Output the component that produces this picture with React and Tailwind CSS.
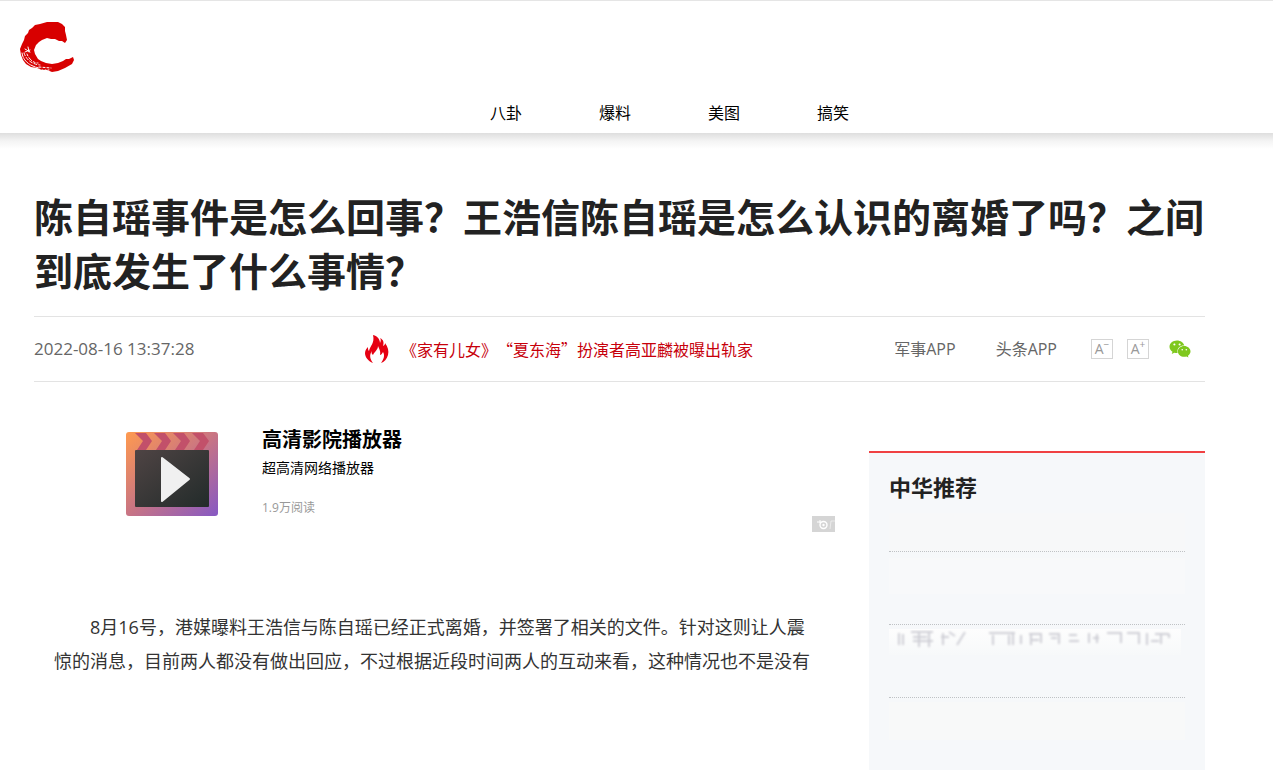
import React from 'react';
import { FaWeixin } from 'react-icons/fa';

const NAV_ITEMS = ['八卦', '爆料', '美图', '搞笑'];
const APP_LINKS = ['军事APP', '头条APP'];

function Logo() {
  return (
    <svg viewBox="0 0 54 52" className="block w-[54px] h-[52px]" aria-hidden="true">
      <path
        fill="#d80000"
        d="M34 1 L27 1 L20 3 L15 4 L12 7 L9 9 L8 12 L5 15 L4 19 L2 23 L0 28 L1 34 L3 39 L6 43 L11 46 L17 47 L22 49 L27 49 L32 51 L38 50 L45 47 L52 43 L54 39 L53 36 L49 38 L46 38 L43 40 L38 42 L32 43 L26 42 L21 40 L18 38 L15 33 L14 29 L16 24 L19 21 L22 19 L27 17 L31 18 L35 18 L39 20 L42 20 L45 22 L47 19 L46 14 L45 10 L45 6 L42 3 L38 1 Z"
      />
      <g fill="none" stroke="#fff" strokeWidth="1" strokeLinecap="round">
        <path d="M2 32 C3 40 10 45 19 47" strokeDasharray="4 1 2 1" />
        <path d="M4 32 C6 38 11 43 20 44" strokeDasharray="3 2" />
        <path d="M7 33 C9 38 13 42 18 42" strokeDasharray="2 2 4 2" />
        <path d="M5 28 L10 31 M8 26 L9 31 M5 31 L10 29" />
        <path d="M19 46 L31 47" strokeDasharray="2 2" />
        <path d="M22 49 L29 49" strokeDasharray="1 2" />
      </g>
    </svg>
  );
}

function Flame() {
  return (
    <svg viewBox="0 0 24 28" className="block w-6 h-7 shrink-0" aria-hidden="true">
      <path
        fill="#e60012"
        d="M8 0 C13 1 15 5 15 8 C16 6 16 4 15 3 C19 5 19 8 18 11 C20 10 20 9 20 8 C23 12 24 16 23 20 C22 24 19 27 16 28 C19 24 20 20 18 17 C17 19 16 20 15 20 C16 16 14 14 13 11 C13 15 9 17 8 20 C7 19 6 18 7 16 C4 20 5 24 8 28 C3 26 0 22 0 18 C0 15 2 13 3 12 C3 14 3 15 4 16 C5 11 10 8 8 0 Z"
      />
    </svg>
  );
}

function PlayerIcon() {
  return (
    <svg viewBox="0 0 92 84" className="block w-[92px] h-[84px] shrink-0" aria-hidden="true">
      <defs>
        <linearGradient id="frame" x1="0" y1="0" x2="1" y2="1">
          <stop offset="0" stopColor="#ff9a4f" />
          <stop offset="0.5" stopColor="#c87484" />
          <stop offset="1" stopColor="#8659c4" />
        </linearGradient>
        <linearGradient id="screen" x1="0" y1="0" x2="1" y2="1">
          <stop offset="0" stopColor="#4f4444" />
          <stop offset="1" stopColor="#222b2a" />
        </linearGradient>
      </defs>
      <rect width="92" height="84" rx="3" fill="url(#frame)" />
      <g fill="#c2506a">
        <path d="M9 1 H20 L26 9 L20 18 H11 L17 9 Z" />
        <path d="M28 1 H39 L45 9 L39 18 H30 L36 9 Z" />
        <path d="M47 1 H58 L64 9 L58 18 H49 L55 9 Z" />
        <path d="M66 1 H77 L83 9 L77 18 H68 L74 9 Z" />
      </g>
      <rect x="9" y="18" width="74" height="57" rx="1" fill="url(#screen)" />
      <path d="M36 26 L63 47 L36 69 Z" fill="#f0f0f0" stroke="#f0f0f0" strokeWidth="2" strokeLinejoin="round" />
    </svg>
  );
}

function AdMark() {
  return (
    <svg viewBox="0 0 23 16" className="block w-[23px] h-4" aria-hidden="true">
      <rect width="23" height="16" fill="#d5d5d5" />
      <g fill="none" stroke="#fff">
        <circle cx="11.5" cy="9" r="3.5" strokeWidth="1.4" />
        <path d="M5 6 H9 M8 4 V7" strokeWidth="1" />
        <path d="M18 13 L19 5 H23" strokeWidth="1" opacity="0.5" />
      </g>
      <circle cx="11.5" cy="9" r="1.2" fill="#fff" />
    </svg>
  );
}

function Header() {
  return (
    <header className="bg-white">
      <div className="border-t border-[#e5e5e5] px-5 pt-5">
        <a href="#" aria-label="中华网" className="inline-block align-top"><Logo /></a>
      </div>
      <nav className="mt-6 flex gap-[77px] pb-1 pl-[490px] text-base leading-8 text-black">
        {NAV_ITEMS.map((item) => (
          <a key={item} href="#">{item}</a>
        ))}
      </nav>
      <div className="h-4 bg-linear-to-b from-[#dedede] via-[#f4f4f4] to-white"></div>
    </header>
  );
}

function FontButton({ sign, label }) {
  return (
    <button
      type="button"
      aria-label={label}
      className="flex h-5 w-[22px] items-center justify-center border border-[#d5d5d5] text-sm leading-4 text-[#999]"
    >
      A<sup className="text-[10px]">{sign}</sup>
    </button>
  );
}

function ArticleInfo() {
  return (
    <div className="flex h-[66px] items-center border-y border-[#e3e3e3] pr-3.5 text-base text-[#666]">
      <time className="w-[331px] text-[17px]">2022-08-16 13:37:28</time>
      <a href="#" className="flex items-center gap-3 text-[#c7000b]">
        <Flame />
        <span className="font-['Noto_Sans_CJK_SC',sans-serif] [text-spacing-trim:space-all]">
          《家有儿女》“夏东海”扮演者高亚麟被曝出轨家
        </span>
      </a>
      <div className="ml-auto flex items-center">
        {APP_LINKS.map((link) => (
          <a key={link} href="#" className="mr-10">{link}</a>
        ))}
        <div className="-ml-1.5 flex items-center gap-3.5">
          <FontButton sign="−" label="缩小字体" />
          <FontButton sign="+" label="放大字体" />
          <a href="#" aria-label="微信" className="ml-1.5 text-[#7fc81e]">
            <FaWeixin className="h-[22px] w-[22px]" />
          </a>
        </div>
      </div>
    </div>
  );
}

function Promo() {
  return (
    <section className="flex flex-col">
      <a href="#" className="flex gap-11 pl-[92px] text-black">
        <div className="pt-2"><PlayerIcon /></div>
        <div>
          <h2 className="text-xl leading-8 font-bold">高清影院播放器</h2>
          <p className="text-sm leading-6">超高清网络播放器</p>
          <p className="mt-4 text-xs leading-6 text-[#999]">1.9万阅读</p>
        </div>
      </a>
      <div className="-mt-1 flex justify-end"><AdMark /></div>
    </section>
  );
}

function Recommend() {
  return (
    <aside className="mt-[27px] w-[336px] shrink-0 border-t-2 border-[#f04142] bg-[#f6f8fa] px-5 pt-3.5">
      <h2 className="mb-1.5 text-[22px] leading-10 font-bold text-[#222]">中华推荐</h2>
      <ul>
        <li className="h-[39px] border-b border-dotted border-[#bfc2c5] bg-[#f7f8f9]"></li>
        <li className="h-[73px] border-b border-dotted border-[#bfc2c5] pt-1.5">
          <div className="h-9 bg-[#f8f9fa]"></div>
        </li>
        <li className="h-[73px] border-b border-dotted border-[#bfc2c5] pt-1">
          <svg viewBox="0 0 296 26" className="block h-[26px] w-full" preserveAspectRatio="none" aria-hidden="true">
            <defs>
              <linearGradient id="haze" x1="0" y1="0" x2="0" y2="1">
                <stop offset="0" stopColor="#fdfdfd" />
                <stop offset="1" stopColor="#f7f9fa" />
              </linearGradient>
              <filter id="soft"><feGaussianBlur stdDeviation="1" /></filter>
            </defs>
            <rect width="292" height="26" fill="url(#haze)" />
            <g fill="none" stroke="#cfcfd6" strokeWidth="2" filter="url(#soft)">
              <path d="M10 4 V16 M14 5 V16 M22 3 H44 M24 8 H38 M24 12 H44 M30 4 V18 M40 4 V18 M52 8 H60 M54 4 V16 M60 3 L66 7 M76 3 L68 16" />
              <path d="M100 4 H126 M104 6 V16 M120 6 V16 M124 4 V16 M132 6 V15 M140 5 H152 V14 M142 11 H150 M142 6 V16" />
              <path d="M160 5 H170 V15 M162 9 H168 M180 6 H188 M180 12 H190 M200 4 V14 M204 9 H210 M208 5 V14 M218 4 H232 V14" />
              <path d="M238 4 H250 V15 M258 4 V16 M262 12 H270 M272 4 V15 M266 5 H280 M280 5 V9" />
            </g>
          </svg>
        </li>
        <li className="pt-1">
          <div className="h-[38px] bg-[#f8f9f9]"></div>
        </li>
      </ul>
    </aside>
  );
}

export default function App() {
  return (
    <div className="flex min-h-screen flex-col bg-white font-['Open_Sans','Noto_Sans_CJK_SC',sans-serif]" lang="zh-CN">
      <Header />
      <main className="flex flex-1 flex-col pt-[41px] pr-[68px] pl-[34px]">
        <h1 className="mb-[18px] text-[39px] leading-[54px] font-bold text-[#222] [text-spacing-trim:space-all]">
          陈自瑶事件是怎么回事？王浩信陈自瑶是怎么认识的离婚了吗？之间到底发生了什么事情？
        </h1>
        <ArticleInfo />
        <div className="flex flex-1 justify-between pt-[42px]">
          <article className="w-[801px]">
            <Promo />
            <p className="mt-[78px] pr-6 pl-5 indent-9 text-lg leading-[34px] text-[#333] [text-spacing-trim:space-all]">
              8月16号，港媒曝料王浩信与陈自瑶已经正式离婚，并签署了相关的文件。针对这则让人震惊的消息，目前两人都没有做出回应，不过根据近段时间两人的互动来看，这种情况也不是没有
            </p>
          </article>
          <Recommend />
        </div>
      </main>
    </div>
  );
}
